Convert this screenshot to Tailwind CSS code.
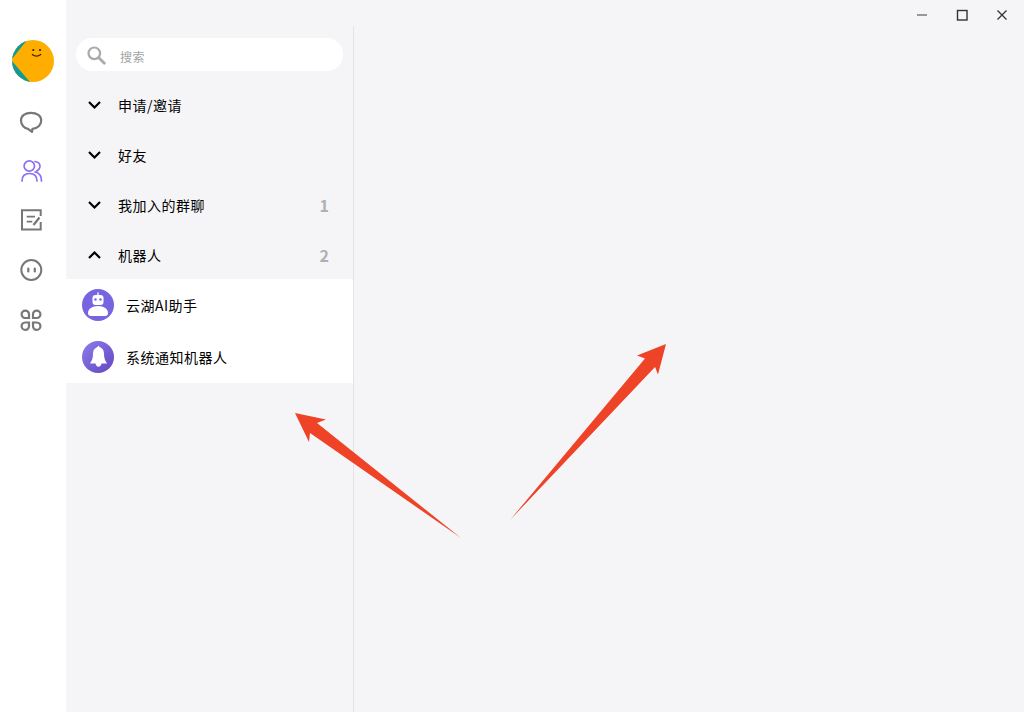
<!DOCTYPE html>
<html lang="zh">
<head>
<meta charset="utf-8">
<script src="https://cdn.jsdelivr.net/npm/@tailwindcss/browser@4"></script>
</head>
<body class="m-0 bg-[#f5f5f8] font-['Noto_Sans_CJK_SC','Liberation_Sans',sans-serif]">
<div class="relative flex h-[712px] w-[1024px] overflow-hidden bg-[#f5f5f8]">
  <!-- Left rail -->
  <aside class="flex h-full w-[66px] shrink-0 flex-col items-center bg-white pt-[40px] pr-[4px] box-border">
    <svg class="ml-[4px] block h-[42px] w-[42px]" viewBox="0 0 42 42">
      <defs><clipPath id="av"><circle cx="21" cy="21" r="21"/></clipPath></defs>
      <g clip-path="url(#av)">
        <rect width="42" height="42" fill="#ffae00"/>
        <path d="M0 19L15 0H0Z" fill="#0f9a97"/>
        <path d="M0 21L18 42H0Z" fill="#0f9a97"/>
      </g>
      <circle cx="21.300" cy="10" r="1.100" fill="#2e2208"/>
      <circle cx="28" cy="10" r="1.100" fill="#2e2208"/>
      <path d="M20.300 14.500Q24.500 17.800 28.700 14.500" fill="none" stroke="#2e2208" stroke-width="1.200" stroke-linecap="round"/>
    </svg>
    <svg class="mt-[28px] block h-[24px] w-[24px]" viewBox="0 0 24 24" fill="none" stroke="#777" stroke-width="2.200" stroke-linejoin="round"><path d="M12 2.800C6 2.800 2 6 2 10.500C2 15 5.500 18.300 9 18.800L13 21.800L13.500 18.800C18.500 18.500 22.200 15 22.200 10.500C22.200 6 18 2.800 12 2.800Z"/></svg>
    <svg class="mt-[25px] block h-[24px] w-[24px]" viewBox="0 0 24 24" fill="none" stroke="#8b6ff5" stroke-width="1.700" stroke-linecap="round"><circle cx="10.300" cy="7" r="5.200"/><path d="M3 22C3 17 6 14.500 10.500 14.500S18 17 18 22"/><path d="M16 2.500C19.500 3 21 5 21 7.500C21 10 19 11.500 16.500 13C20 14 22.500 17 22.500 22"/></svg>
    <svg class="mt-[25px] block h-[24px] w-[24px]" viewBox="0 0 24 24" fill="none" stroke="#777" stroke-width="2"><path d="M21.700 8V2.300H3V21.500H21.700V14"/><path d="M7.700 8.700H16M7.700 13.700H13.300" stroke-width="1.800"/><path d="M14.500 17L20.500 9.500" stroke-width="2.200"/></svg>
    <svg class="mt-[26px] block h-[24px] w-[24px]" viewBox="0 0 24 24" fill="none" stroke="#777" stroke-width="2"><circle cx="12.300" cy="12" r="10"/><path d="M9.300 10.500V13.500M15.800 10.500V13.500" stroke-width="2.200" stroke-linecap="round"/></svg>
    <svg class="mt-[26px] block h-[24px] w-[24px]" viewBox="0 0 24 24" fill="none" stroke="#777" stroke-width="2.200"><path d="M10 10H6.200A3.700 3.700 0 1 1 10 6.200Z"/><path d="M14 10H17.800A3.700 3.700 0 1 0 14 6.200Z"/><path d="M10 14.500H6.200A3.700 3.700 0 1 0 10 18.300Z"/><path d="M14 14.500H17.800A3.700 3.700 0 1 1 14 18.300Z"/></svg>
  </aside>

  <!-- Main column -->
  <div class="flex min-w-0 flex-1 flex-col">
    <!-- Window bar -->
    <header class="flex h-[26px] shrink-0 items-center justify-end pr-[2px] pt-[4px] box-border">
      <button class="flex h-[22px] w-[40px] items-center justify-center"><svg class="h-[12px] w-[12px]" viewBox="0 0 12 12"><path d="M1 6H11" stroke="#707070" stroke-width="1.400"/></svg></button>
      <button class="flex h-[22px] w-[40px] items-center justify-center"><svg class="h-[12px] w-[12px]" viewBox="0 0 12 12"><rect x="1.500" y="1.500" width="9.500" height="9.500" fill="none" stroke="#333" stroke-width="1.400"/></svg></button>
      <button class="flex h-[22px] w-[40px] items-center justify-center"><svg class="h-[12px] w-[12px]" viewBox="0 0 12 12"><path d="M1.500 1.500L10.500 10.500M10.500 1.500L1.500 10.500" stroke="#333" stroke-width="1.300"/></svg></button>
    </header>

    <div class="flex min-h-0 flex-1">
      <!-- Contact list -->
      <section class="w-[288px] shrink-0 border-r border-[#e4e4e7] box-border">
        <div class="mx-[10px] mt-[12px] flex h-[33px] items-center rounded-[16px] bg-white pl-[10px]">
          <svg class="h-[20px] w-[20px]" viewBox="0 0 20 20" fill="none" stroke="#aaa"><circle cx="8.300" cy="8.300" r="5.800" stroke-width="2.200"/><path d="M12.800 12.800L18.300 18.300" stroke-width="2.800" stroke-linecap="round"/></svg>
          <span class="ml-[14px] pt-[4px] text-[12px] leading-[29px] tracking-[0.5px] text-[#a3a3a3]">搜索</span>
        </div>

        <div class="mt-[9px]">
          <div class="flex h-[50px] items-center pl-[21px] pr-[24px]">
            <svg class="h-[12px] w-[15px]" viewBox="0 0 15 12" fill="none" stroke="#000" stroke-width="2.200"><path d="M2 3L7.500 8.500L13 3"/></svg>
            <span class="ml-[16px] flex-1 text-[14px] tracking-[0.5px] text-black">申请/邀请</span>
          </div>
          <div class="flex h-[50px] items-center pl-[21px] pr-[24px]">
            <svg class="h-[12px] w-[15px]" viewBox="0 0 15 12" fill="none" stroke="#000" stroke-width="2.200"><path d="M2 3L7.500 8.500L13 3"/></svg>
            <span class="ml-[16px] flex-1 text-[14px] tracking-[0.5px] text-black">好友</span>
          </div>
          <div class="flex h-[50px] items-center pl-[21px] pr-[24px]">
            <svg class="h-[12px] w-[15px]" viewBox="0 0 15 12" fill="none" stroke="#000" stroke-width="2.200"><path d="M2 3L7.500 8.500L13 3"/></svg>
            <span class="ml-[16px] flex-1 text-[14px] tracking-[0.5px] text-black">我加入的群聊</span>
            <span class="text-[16px] font-bold text-[#b0b0b0]">1</span>
          </div>
          <div class="flex h-[50px] items-center pl-[21px] pr-[24px]">
            <svg class="h-[12px] w-[15px]" viewBox="0 0 15 12" fill="none" stroke="#000" stroke-width="2.200"><path d="M2 9L7.500 3.500L13 9"/></svg>
            <span class="ml-[16px] flex-1 text-[14px] tracking-[0.5px] text-black">机器人</span>
            <span class="text-[16px] font-bold text-[#b0b0b0]">2</span>
          </div>
        </div>

        <div class="-mt-[1px] bg-white">
          <div class="flex h-[52px] items-center pl-[16px]">
            <svg class="h-[32px] w-[32px]" viewBox="0 0 32 32"><circle cx="16" cy="16" r="16" fill="#7664e0"/><rect x="15.300" y="3.500" width="1.400" height="3" fill="#fff"/><rect x="10.500" y="6" width="11" height="10" rx="3" fill="#fff"/><circle cx="13.500" cy="10.500" r="1.200" fill="#7664e0"/><circle cx="18.500" cy="10.500" r="1.200" fill="#7664e0"/><path d="M6 24C6 20 10 17 16 17S26 20 26 24C26 26 25 27 23 27H9C7 27 6 26 6 24Z" fill="#fff"/></svg>
            <span class="ml-[12px] text-[14px] tracking-[0.5px] text-black">云湖AI助手</span>
          </div>
          <div class="flex h-[52px] items-center pl-[16px]">
            <svg class="h-[32px] w-[32px]" viewBox="0 0 32 32"><defs><linearGradient id="bell" x1="0" y1="0" x2="1" y2="1"><stop offset="0" stop-color="#8d7dea"/><stop offset="1" stop-color="#6445c2"/></linearGradient></defs><circle cx="16" cy="16" r="16" fill="url(#bell)"/><path d="M16.500 4.500C15.800 5.500 15.500 6 14.500 6.500C11.800 7.800 11 10 11 13C11 17 10 19.500 8 22.500H13.500C13.700 24.500 15 25.700 16.500 25.700S19.300 24.500 19.500 22.500H25C23 19.500 22 17 22 13C22 10 21.200 7.800 18.500 6.500C17.500 6 17.200 5.500 16.500 4.500Z" fill="#fff"/></svg>
            <span class="ml-[12px] text-[14px] tracking-[0.5px] text-black">系统通知机器人</span>
          </div>
        </div>
      </section>
      <div class="min-w-0 flex-1"></div>
    </div>
  </div>

  <!-- Annotation arrows laid over the screenshot -->
  <svg class="pointer-events-none absolute left-0 top-0 h-[712px] w-[1024px]" viewBox="0 0 1024 712">
    <path d="M295 413L326 419.500L317 423L461 538L310 433L309 442Z" fill="#ee4327"/>
    <path d="M666 344L637 355.500L645 358.500L510 520L655 367L658 374.500Z" fill="#ee4327"/>
  </svg>
</div>
</body>
</html>
